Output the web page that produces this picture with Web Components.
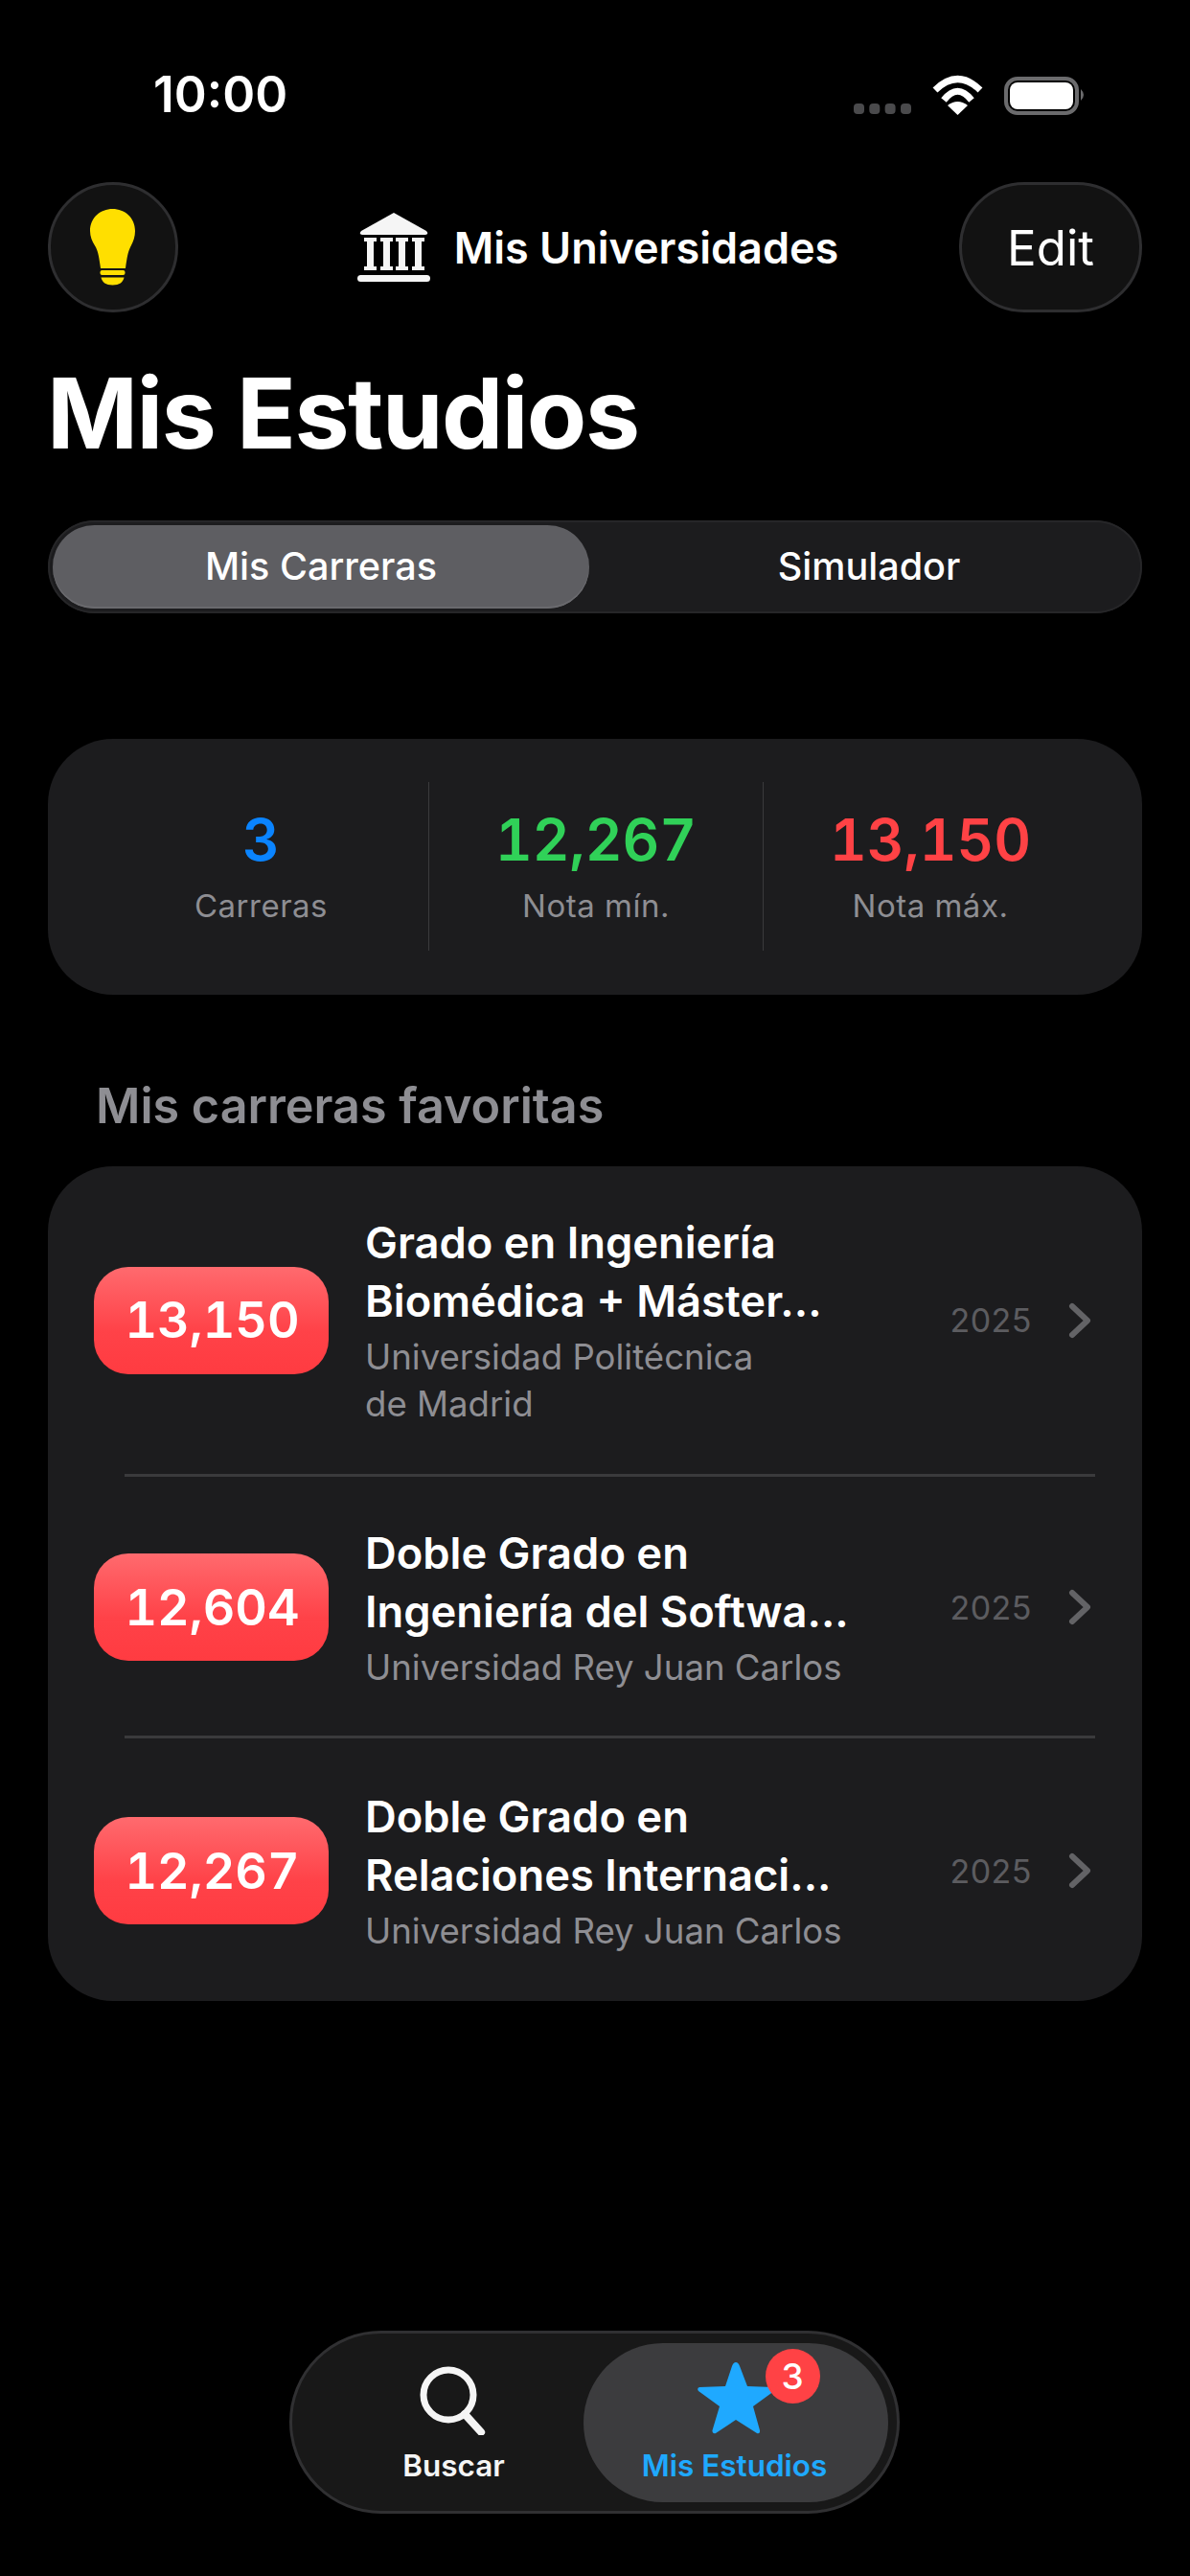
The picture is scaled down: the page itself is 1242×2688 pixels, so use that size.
<!DOCTYPE html>
<html lang="es">
<head>
<meta charset="utf-8">
<title>Mis Estudios</title>
<style>
html,body{margin:0;background:#000;color:#fff;font-family:Inter,"Liberation Sans",sans-serif}
body{width:1242px;height:2688px;overflow:hidden}
app-page{display:flex}
</style>
</head>
<body>
<app-page>
  <status-bar></status-bar>
  <nav-bar></nav-bar>
  <page-title>Mis Estudios</page-title>
  <seg-control></seg-control>
  <stats-card>
    <stat-cell value="3" label="Carreras" color="#0a84ff"></stat-cell>
    <stat-cell value="12,267" label="Nota mín." color="#30d158" divided></stat-cell>
    <stat-cell value="13,150" label="Nota máx." color="#ff4245" divided></stat-cell>
  </stats-card>
  <section-head>Mis carreras favoritas</section-head>
  <fav-list>
    <fav-row score="13,150" year="2025" h="321">
      <span slot="title">Grado en Ingeniería<br>Biomédica + Máster...</span>
      <span slot="sub">Universidad Politécnica<br>de Madrid</span>
    </fav-row>
    <fav-row score="12,604" year="2025" h="273" divided>
      <span slot="title">Doble Grado en<br>Ingeniería del Softwa...</span>
      <span slot="sub">Universidad Rey Juan Carlos</span>
    </fav-row>
    <fav-row score="12,267" year="2025" h="277" divided>
      <span slot="title">Doble Grado en<br>Relaciones Internaci...</span>
      <span slot="sub">Universidad Rey Juan Carlos</span>
    </fav-row>
  </fav-list>
  <tab-bar></tab-bar>
</app-page>
<script>
function def(name, css, html, init){
  customElements.define(name, class extends HTMLElement{
    connectedCallback(){
      if(this.shadowRoot) return;
      const r=this.attachShadow({mode:'open'});
      r.innerHTML='<style>'+css+'</style>'+(typeof html==='function'?html(this):html);
      if(init) init(this,r);
    }
  });
}
def('app-page',`:host{display:flex;flex-direction:column;height:2688px;box-sizing:border-box;padding:0 50px 65px}`,`<slot></slot>`);

def('status-bar',`:host{display:flex;align-items:flex-start;height:190px;box-sizing:border-box;padding:73px 58px 0 110px;justify-content:space-between}
.t{font-size:51.500px;font-weight:600;line-height:50px}
svg{display:block}`,
`<span class="t">10:00</span>
<svg width="244" height="50" viewBox="0 0 244 50">
 <g fill="#4a4a4c"><rect x="1" y="35" width="11" height="11" rx="4"/><rect x="17.300" y="35" width="11" height="11" rx="4"/><rect x="33.600" y="35" width="11" height="11" rx="4"/><rect x="50" y="35" width="11" height="11" rx="4"/></g>
 <g fill="none" stroke="#fff" stroke-width="7"><path d="M86 21 Q109.500 -2 133 21"/><path d="M95 31.500 Q109.500 13 124 31.500"/></g>
 <path d="M99 37 Q109.500 29 120 37 L109.500 47 Z" fill="#fff"/>
 <rect x="160" y="9" width="74" height="36" rx="12" fill="none" stroke="#6b6b6d" stroke-width="4"/>
 <rect x="164" y="13" width="66" height="28" rx="8" fill="#fff"/>
 <path d="M238 20 Q244 26 238 32 Z" fill="#6b6b6d"/>
</svg>`);

def('nav-bar',`:host{display:grid;grid-template-columns:1fr auto 1fr;align-items:center;height:136px}
.c{display:flex;align-items:center;gap:25px;font-size:45px;font-weight:600;padding-left:6px;white-space:nowrap}
.b{box-sizing:border-box;height:136px;background:#121212;border:3px solid #2e2e30;display:flex;align-items:center;justify-content:center}
.l{width:136px;border-radius:50%;justify-self:start}
.e{width:191px;border-radius:68px;justify-self:end;font-size:51px;font-weight:400}
svg{display:block}`,
`<div class="b l"><svg width="50" height="80" viewBox="0 0 50 80">
 <path d="M24.500 0C37 0 48 9 48 23c0 7-2.500 12-5 17-2.500 5-3.500 11-5 22H12C10.500 51 9.500 45 7 40 4 35 1 30 1 23 1 9 12 0 24.500 0Z" fill="#ffdf00"/>
 <rect x="11.500" y="64" width="26" height="5" rx="2" fill="#ffdf00"/>
 <path d="M12.500 71.500h24c-1 5-5 8-12 8s-11-3-12-8Z" fill="#ffdf00"/></svg></div>
<div class="c"><svg width="76" height="73" viewBox="0 0 76 73">
 <path d="M38 0 72 19q3 3-1 4H5q-4-1-1-4Z" fill="#f5f5f5"/>
 <g fill="#f5f5f5">
 <path d="M7 26h13v4h-3v26h3v4H7v-4h3V30H7Z"/>
 <path d="M24 26h13v4h-3v26h3v4H24v-4h3V30h-3Z"/>
 <path d="M40 26h13v4h-3v26h3v4H40v-4h3V30h-3Z"/>
 <path d="M57 26h13v4h-3v26h3v4H57v-4h3V30h-3Z"/>
 <rect x="0" y="65" width="76" height="7" rx="3.500"/></g></svg><span>Mis Universidades</span></div>
<div class="b e">Edit</div>`);

def('page-title',`:host{display:block;font-size:102px;font-weight:700;line-height:124px;height:124px;margin-top:43px;margin-left:-1px;letter-spacing:-1.500px;white-space:nowrap}`,`<slot></slot>`);

def('seg-control',`:host{display:grid;grid-template-columns:560px 1fr;height:97px;margin-top:50px;background:#1c1c1e;border-radius:49px;box-sizing:border-box;padding:5px;box-shadow:inset 0 0 0 2px #262628;font-size:39.600px;font-weight:500}
div{display:flex;align-items:center;justify-content:center;padding-bottom:2px}
.a{background:#5e5e62;border-radius:44px;box-shadow:inset 0 -2px 0 #6a6a6e}
.b{padding-left:12px}`,
`<div class="a">Mis Carreras</div><div class="b">Simulador</div>`);

def('stats-card',`:host{display:grid;grid-template-columns:repeat(3,349px);height:267px;margin-top:131px;background:#1c1c1e;border-radius:68px;box-sizing:border-box;padding:45px 48px 46px}`,`<slot></slot>`);

def('stat-cell',`:host{display:flex;flex-direction:column;align-items:center;box-sizing:border-box;padding-top:28px}
:host([divided]){border-left:1px solid #3a3a3c}
.v{font-size:60px;font-weight:600;line-height:64px;font-variant-numeric:tabular-nums}
.l{font-size:33px;color:#8e8e93;line-height:40px;margin-top:17px;letter-spacing:.5px}`,
h=>`<div class="v" style="color:${h.getAttribute('color')}">${h.getAttribute('value')}</div><div class="l">${h.getAttribute('label')}</div>`);

def('section-head',`:host{display:block;font-size:50.300px;font-weight:600;color:#8e8e93;line-height:60px;margin-top:86px;padding-left:50px}`,`<slot></slot>`);

def('fav-list',`:host{display:block;margin-top:33px;background:#1c1c1e;border-radius:68px;overflow:hidden}`,`<slot></slot>`);

def('fav-row',`:host{display:grid;grid-template-columns:245px 1fr auto auto;align-items:center;box-sizing:border-box;padding:0 53px 0 48px;position:relative}
:host([divided]){padding-top:5px}
.line{position:absolute;left:80px;right:49px;top:0;height:3px;background:#3a3a3c}
.s{height:112px;border-radius:36px;background:linear-gradient(#ff6a6e,#ff4248 60%,#ff3b41);display:flex;align-items:center;justify-content:center;font-size:52px;font-weight:600;color:#fff;font-variant-numeric:tabular-nums;padding-left:2px}
.m{padding-left:38px;min-width:0;white-space:nowrap}
.n{font-size:45.300px;font-weight:600;line-height:61px}
.u{font-size:36.600px;color:#8e8e93;line-height:49px;margin-top:4px}
.y{font-size:34px;color:#5c5c60;padding-right:38px;letter-spacing:.5px}
svg{display:block}`,
h=>`${h.hasAttribute('divided')?'<div class="line"></div>':''}
<div class="s">${h.getAttribute('score')}</div>
<div class="m"><div class="n"><slot name="title"></slot></div><div class="u"><slot name="sub"></slot></div></div>
<div class="y">${h.getAttribute('year')}</div>
<svg width="24" height="38" viewBox="0 0 24 38"><path d="M4 4 20 19 4 34" fill="none" stroke="#636366" stroke-width="6" stroke-linecap="round" stroke-linejoin="round"/></svg>`,
(h)=>{h.style.height=h.getAttribute('h')+'px'});

def('tab-bar',`:host{display:grid;grid-template-columns:304px 318px;align-self:center;height:191px;margin-top:auto;margin-left:-2px;box-sizing:border-box;background:#181818;border:3px solid #303032;border-radius:96px;padding:10px 9px 9px 0;font-size:31.500px;font-weight:600}
.t{display:flex;flex-direction:column;align-items:center;position:relative;color:#f5f5f5}
.t svg{display:block}
.i{height:96px;display:flex;align-items:flex-end;justify-content:center;margin-bottom:12px}
.a{background:#3c3c3e;border-radius:84px;color:#1fa9ff}
.a span{margin-left:-2px}
.b{position:absolute;left:190px;top:6px;width:57px;height:57px;border-radius:50%;background:#ff4245;color:#fff;display:flex;align-items:center;justify-content:center;font-size:37px;font-weight:500}
span{white-space:nowrap}`,
`<div class="t" style="padding-left:34px"><div class="i"><svg width="72" height="72" viewBox="0 0 72 72"><circle cx="30" cy="30" r="26" fill="none" stroke="#f5f5f5" stroke-width="7"/><path d="M47 50 66 67" fill="none" stroke="#f5f5f5" stroke-width="8" stroke-linecap="round" transform="rotate(6 47 50)"/></svg></div><span>Buscar</span></div>
<div class="t a"><div class="i"><svg width="82" height="78" viewBox="0 0 82 78"><path d="M41 2q2.500 0 4 4l8 21 27 1q3 1 1 4L59 48l7 25q.5 4-3 3L41 62 20 76q-4 1-3.500-3L24 48 2 32q-2-3 1-4l27-1 7-21q1.500-4 4-4Z" fill="#1fa9ff"/></svg></div><span>Mis Estudios</span><div class="b">3</div></div>`);
</script>
</body>
</html>
